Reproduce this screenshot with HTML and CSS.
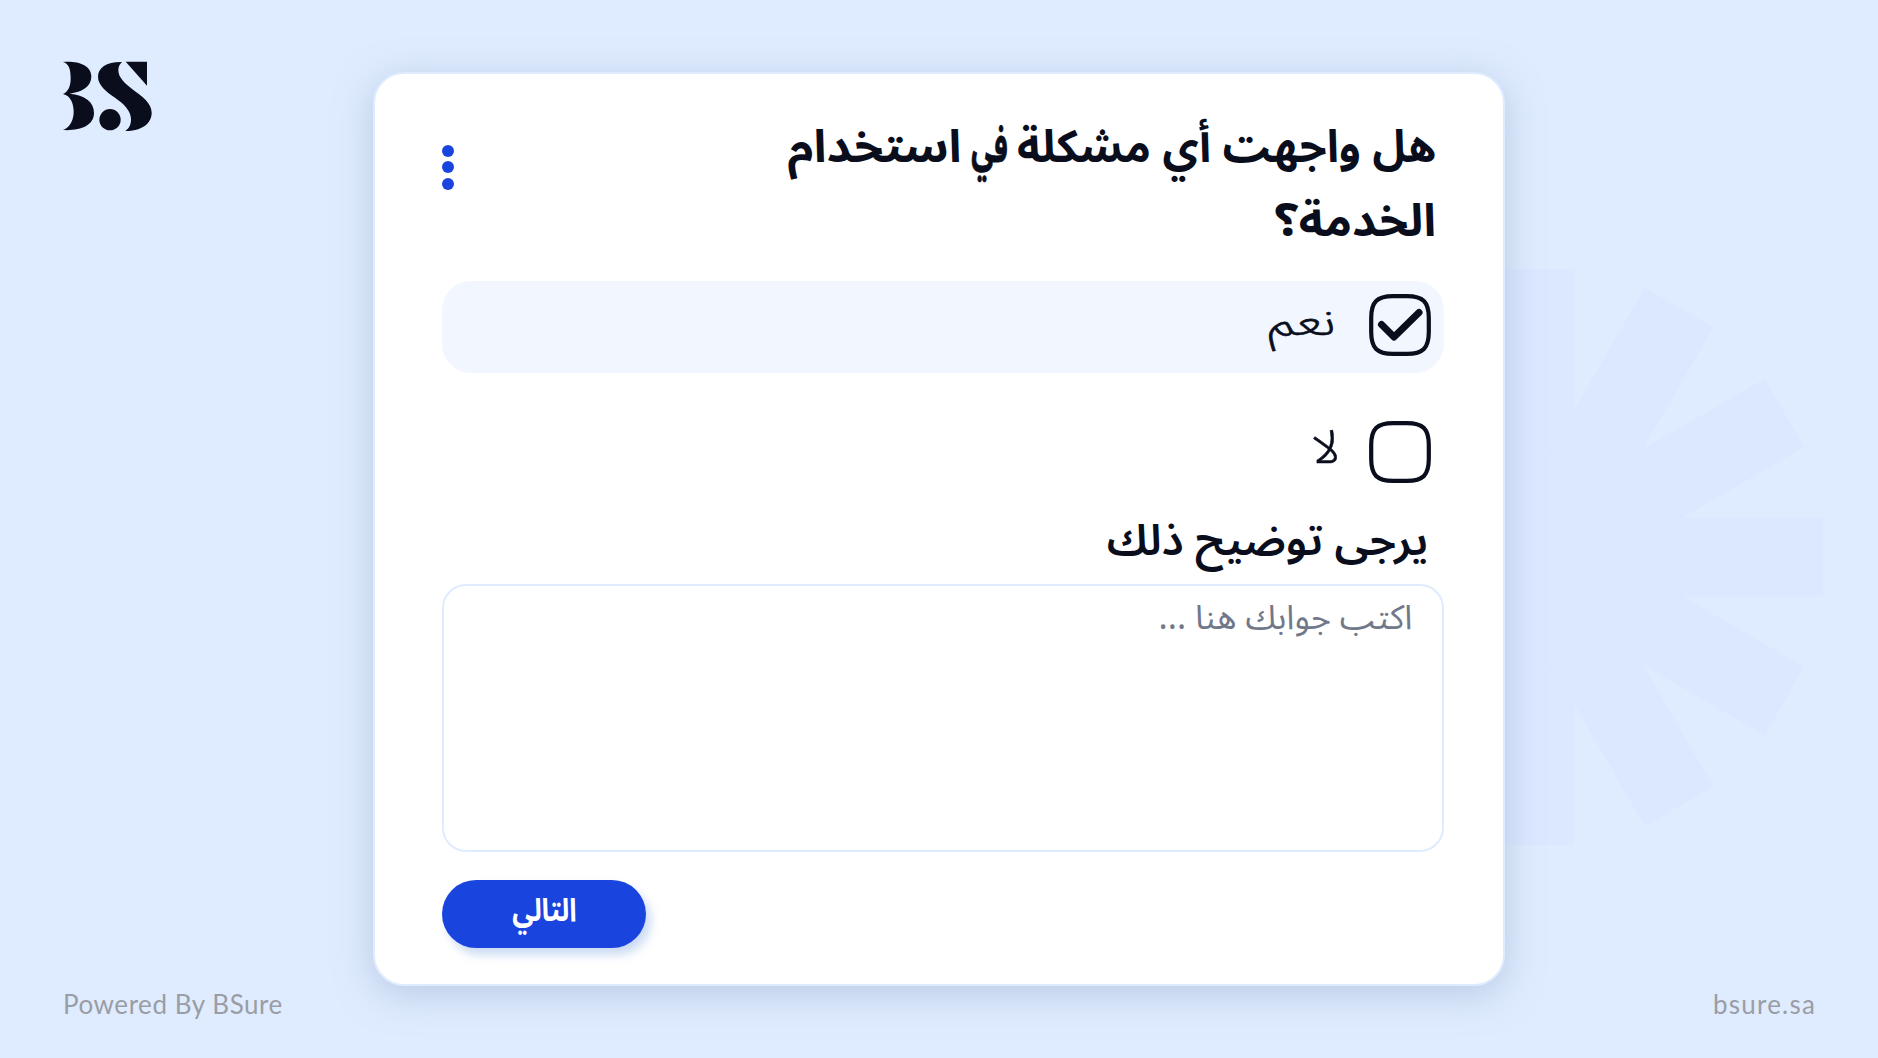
FILE: index.html
```html
<!DOCTYPE html>
<html lang="ar">
<head>
<meta charset="utf-8">
<title>BSure</title>
<link rel="stylesheet" href="styles.css">
</head>
<body>
<svg class="burst" viewBox="-290 -290 580 580" aria-hidden="true">
  <circle r="155"/>
  <rect x="-39.5" y="-288" width="79" height="576" rx="2"/>
  <rect x="-39.5" y="-288" width="79" height="576" rx="2" transform="rotate(30)"/>
  <rect x="-39.5" y="-288" width="79" height="576" rx="2" transform="rotate(60)"/>
  <rect x="-39.5" y="-288" width="79" height="576" rx="2" transform="rotate(90)"/>
  <rect x="-39.5" y="-288" width="79" height="576" rx="2" transform="rotate(120)"/>
  <rect x="-39.5" y="-288" width="79" height="576" rx="2" transform="rotate(150)"/>
</svg>
<div class="page">
  <aside class="side side-start">
    <svg class="logo" viewBox="66 64 272 212" role="img" aria-label="BS">
      <path d="M69 67C112 63 154 76 154 110C154 142 126 157 89 162C134 166 162 186 162 220C162 258 120 274 69 271C92 262 101 238 101 216C101 192 92 168 69 163C86 156 92 138 92 116C92 92 88 72 69 67Z"/>
      <path d="M246 67C200 66 174 84 174 111C174 137 199 156 225 174C252 193 273 213 273 239C273 255 268 266 256 274C306 274 335 251 335 219C335 190 306 169 279 150C254 132 235 113 235 92C235 81 239 73 246 67Z"/>
      <path d="M257 66H321V138Z"/>
      <circle cx="210" cy="240" r="32"/>
    </svg>
    <p class="credit">Powered By BSure</p>
  </aside>

  <main class="card" dir="rtl">
    <header class="head">
      <h1 class="title"><span class="fit fit-t1">هل واجهت أي مشكلة</span> <span class="fit fit-fi">في</span> <span class="fit fit-use">استخدام</span><br><span class="fit fit-t2">الخدمة؟</span></h1>
      <button class="menu" aria-label="القائمة"><i></i><i></i><i></i></button>
    </header>

    <div class="option selected">
      <svg class="box" viewBox="0 0 62 62"><path class="frame" d="M24 2.2H38C54 2.2 59.8 8 59.8 24V38C59.8 54 54 59.8 38 59.8H24C8 59.8 2.2 54 2.2 38V24C2.2 8 8 2.2 24 2.2Z"/><path class="tick" d="M12.5 30.5L25 43L50 18.5"/></svg>
      <span class="fit fit-yes">نعم</span>
    </div>
    <div class="option plain">
      <svg class="box" viewBox="0 0 62 62"><path class="frame" d="M24 2.2H38C54 2.2 59.8 8 59.8 24V38C59.8 54 54 59.8 38 59.8H24C8 59.8 2.2 54 2.2 38V24C2.2 8 8 2.2 24 2.2Z"/></svg>
      <span class="fit fit-no">لا</span>
    </div>

    <h2 class="subtitle"><span class="fit fit-sub">يرجى توضيح ذلك</span></h2>
    <div class="answer"><span class="fit fit-ph">اكتب جوابك هنا ...</span></div>
    <button class="next"><span class="fit fit-next">التالي</span></button>
  </main>

  <aside class="side side-end">
    <p class="credit">bsure.sa</p>
  </aside>
</div>
</body>
</html>
```
FILE: styles.css
```css
* { box-sizing: border-box; margin: 0; padding: 0; }

body {
  height: 1058px;
  overflow: hidden;
  position: relative;
  background: #dfecff;
  color: #0a0e1c;
  font-family: "Noto Sans Arabic", "Noto Kufi Arabic", "DejaVu Sans", sans-serif;
}

.burst {
  position: absolute;
  left: 1244.5px;
  top: 266.5px;
  width: 580px;
  height: 580px;
  fill: #dbe8ff;
}

.page {
  position: relative;
  display: grid;
  grid-template-columns: 373px 1132px 1fr;
  height: 1058px;
}

.side {
  display: flex;
  flex-direction: column;
  padding: 61px 62px 36px 62px;
  white-space: nowrap;
}
.side-end { align-items: flex-end; }

.logo { width: 90.7px; height: 70.7px; fill: #0a0e1c; }

.credit {
  margin-top: auto;
  padding-left: 1px;
  color: #9a9da5;
  font: 26px/36px Lato, sans-serif;
  letter-spacing: .55px;
}
.side-end .credit { letter-spacing: 1.2px; }

.card {
  margin: 72px 0;
  height: 914px;
  padding: 0 59px 0 67px;
  border: 2px solid #dfebff;
  border-radius: 31px;
  background: #fff;
  box-shadow: 0 8px 36px rgba(150, 170, 200, .5);
}

/* per-phrase width adjustments, anchored to the right edge */
.fit { display: inline-block; white-space: nowrap; transform-origin: 100% 50%; }
.fit-t1 { transform: scaleX(.988); }
.fit-fi { transform: translateX(8px) scaleX(.62); -webkit-text-stroke: .8px; }
.fit-use { transform: translateX(32px) scaleX(1.05); }
.fit-t2 { transform: scaleX(1.04); }
.fit-yes { transform: translate(3px, -3px) scaleX(1.28); -webkit-text-stroke: .6px; }
.fit-no { font-size: 46px; transform: translate(7px, -4px) scaleX(1.1); -webkit-text-stroke: .5px; }
.fit-sub { transform: translateY(1.5px) scaleX(1.03); }
.fit-ph { transform: scaleX(1.01); }
.fit-next { transform-origin: 50% 50%; transform: translateY(-3px) scaleX(.84); }

.head {
  display: flex;
  justify-content: space-between;
  height: 207px;
  padding: 37px 8px 0 0;
}
.title { font-size: 45px; line-height: 74px; font-weight: 700; white-space: nowrap; }

.menu {
  display: flex;
  flex-direction: column;
  gap: 4.3px;
  margin-top: 34px;
  height: 45px;
  border: 0;
  background: none;
}
.menu i { width: 12px; height: 12px; border-radius: 50%; background: #1a44de; }

.option {
  display: flex;
  align-items: center;
  gap: 36px;
  height: 92px;
  padding-right: 13px;
  border-radius: 29px;
  font-size: 40px;
  font-weight: 300;
}
.selected { margin-bottom: 34px; padding-bottom: 4px; background: #f1f6ff; }
.plain { padding-bottom: 2px; }

.box { width: 62px; height: 62px; fill: none; stroke: #0a0e1c; }
.frame { stroke-width: 4.2; }
.tick { stroke-width: 7; stroke-linecap: round; stroke-linejoin: round; }

.subtitle {
  height: 85px;
  padding: 9px 16px 0 0;
  font-size: 43px;
  line-height: 64px;
  font-weight: 600;
}
.answer {
  height: 268px;
  border: 2px solid #dfebff;
  border-radius: 24px;
  padding: 8px 29px;
  color: #71788a;
  font-size: 34px;
  line-height: 48px;
}
.next {
  display: block;
  width: 204px;
  height: 68px;
  margin: 28px auto 0 0;
  border: 0;
  border-radius: 34px;
  background: #1a44de;
  color: #fff;
  font: 700 32px "Noto Sans Arabic", "DejaVu Sans", sans-serif;
  box-shadow: 5px 7px 10px rgba(170, 195, 235, .6);
}
```
